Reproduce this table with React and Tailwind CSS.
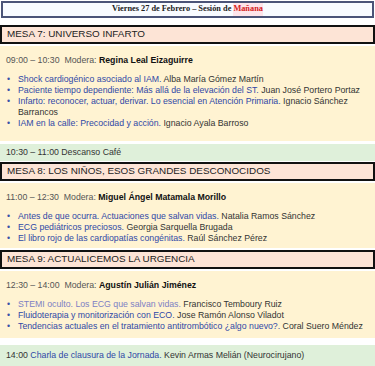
import React from 'react';

const sans = { fontFamily: '"Liberation Sans", Arial, sans-serif' };

const mesas = [
  {
    title: 'MESA 7: UNIVERSO INFARTO',
    time: '09:00 – 10:30',
    mod: 'Regina Leal Eizaguirre',
    pb: 'pb-[12px]',
    talks: [
      ['Shock cardiogénico asociado al IAM.', 'Alba María Gómez Martín'],
      ['Paciente tiempo dependiente: Más allá de la elevación del ST.', 'Juan José Portero Portaz'],
      ['Infarto: reconocer, actuar, derivar. Lo esencial en Atención Primaria.', 'Ignacio Sánchez Barrancos'],
      ['IAM en la calle: Precocidad y acción.', 'Ignacio Ayala Barroso'],
    ],
  },
  {
    title: 'MESA 8: LOS NIÑOS, ESOS GRANDES DESCONOCIDOS',
    time: '11:00 – 12:30',
    mod: 'Miguel Ángel Matamala Morillo',
    pb: 'pb-[4px]',
    talks: [
      ['Antes de que ocurra. Actuaciones que salvan vidas.', 'Natalia Ramos Sánchez'],
      ['ECG pediátricos preciosos.', 'Georgia Sarquella Brugada'],
      ['El libro rojo de las cardiopatías congénitas.', 'Raúl Sánchez Pérez'],
    ],
  },
  {
    title: 'MESA 9: ACTUALICEMOS LA URGENCIA',
    time: '12:30 – 14:00',
    mod: 'Agustín Julián Jiménez',
    pb: 'pb-[6px]',
    talks: [
      ['STEMI oculto. Los ECG que salvan vidas.', 'Francisco Temboury Ruiz', true],
      ['Fluidoterapia y monitorización con ECO.', 'Jose Ramón Alonso Viladot'],
      ['Tendencias actuales en el tratamiento antitrombótico ¿algo nuevo?.', 'Coral Suero Méndez'],
    ],
  },
];

function MesaHeader({ title }) {
  return (
    <div className="h-[19px] border-2 border-[#111] bg-[#fde4d6] pl-[5px] flex items-center text-[9.9px] text-[#222]">
      {title}
    </div>
  );
}

function Mesa({ mesa }) {
  return (
    <div className={`bg-[#fff3d2] mt-[2px] px-[6px] pt-[9px] ${mesa.pb} text-[8.75px] leading-[11px]`}>
      <div className="text-[#555]">
        {mesa.time}&nbsp;&nbsp;Modera: <span className="text-[#111] font-bold">{mesa.mod}</span>
      </div>
      <ul className="mt-[8px]">
        {mesa.talks.map(([t, who, faded]) => (
          <li key={t} className="flex">
            <span className="w-[12px] shrink-0 pl-[1px] text-[#3a50a8]">•</span>
            <span>
              <span className={faded ? 'text-[#7d80c4]' : 'text-[#2f48a6]'}>{t}</span>{' '}
              <span className="text-[#333]">{who}</span>
            </span>
          </li>
        ))}
      </ul>
    </div>
  );
}

export default function App() {
  return (
    <div className="w-[375px] h-[366px] overflow-hidden bg-white flex flex-col" style={sans}>
      {/* Session title */}
      <div className="mx-[1px] mt-[1px] h-[17px] shrink-0 border-2 border-[#4b5478] bg-[#f8fbff] flex items-center justify-center text-[8.3px] font-bold text-[#222]" style={{ fontFamily: '"Liberation Serif", "Times New Roman", serif' }}>
        Viernes 27 de Febrero – Sesión de&nbsp;<span className="text-[#d42020] bg-[#fde4ea]">Mañana</span>
      </div>

      <div className="mt-[7px]">
        <MesaHeader title={mesas[0].title} />
        <Mesa mesa={mesas[0]} />
      </div>

      <div className="mt-[3px] h-[17px] shrink-0 bg-[#dff0da] pl-[6px] flex items-center text-[8.75px] text-[#333]">
        10:30 – 11:00 Descanso Café
      </div>

      <div className="mt-[1px]">
        <MesaHeader title={mesas[1].title} />
        <Mesa mesa={mesas[1]} />
      </div>

      <div className="mt-[2px]">
        <MesaHeader title={mesas[2].title} />
        <Mesa mesa={mesas[2]} />
      </div>

      <div className="mt-[7px] flex-1 bg-[#dff0da] pl-[6px] flex items-center text-[8.75px] text-[#333]">
        <span>14:00 <span className="text-[#2f48a6]">Charla de clausura de la Jornada.</span> Kevin Armas Melián (Neurocirujano)</span>
      </div>
    </div>
  );
}
